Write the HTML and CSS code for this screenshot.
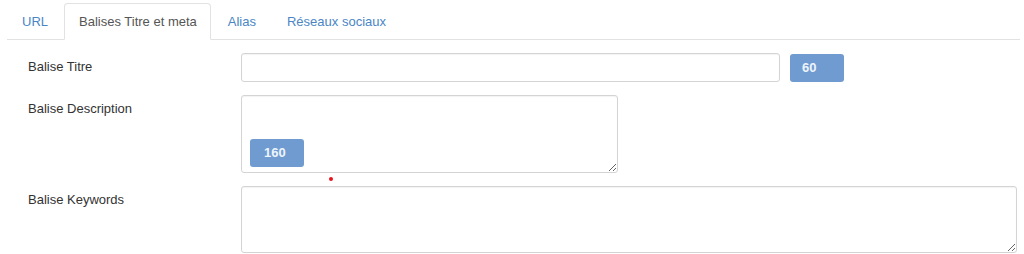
FILE: index.html
```html
<!DOCTYPE html>
<html lang="fr">
  <head>
    <meta charset="UTF-8" />
    <meta name="viewport" content="width=device-width, initial-scale=1.0" />
    <title>Balises Titre et meta</title>
    <link rel="stylesheet" href="styles.css">
  </head>
  <body>
    <div class="panel">
      <ul class="tabs">
        <li><a href="#">URL</a></li>
        <li class="active"><a href="#">Balises Titre et meta</a></li>
        <li><a href="#">Alias</a></li>
        <li><a href="#">Réseaux sociaux</a></li>
      </ul>

      <div class="form">
        <div class="row">
          <label for="metaTitle">Balise Titre</label>
          <div class="control inline">
            <input type="text" id="metaTitle" class="title-input" />
            <span class="counter">60</span>
          </div>
        </div>

        <div class="row">
          <label for="metaDesc">Balise Description</label>
          <div class="control">
            <div class="area-wrap">
              <textarea id="metaDesc" class="desc-area"></textarea>
              <span class="counter counter-inside">160</span>
              <span class="dot"></span>
            </div>
          </div>
        </div>

        <div class="row">
          <label for="metaKeys">Balise Keywords</label>
          <div class="control">
            <textarea id="metaKeys" class="keys-area"></textarea>
          </div>
        </div>
      </div>
    </div>
  </body>
</html>
```

FILE: styles.css
```css
body {
  margin: 0;
  font-family: "Liberation Sans", Arial, sans-serif;
  font-size: 13px;
  color: #333;
  background: #fff;
}

.panel {
  padding: 3px 4px 0 7px;
}

.tabs {
  display: flex;
  list-style: none;
  margin: 0;
  padding: 0;
  border-bottom: 1px solid #e2e2e2;
}

.tabs li {
  margin-right: 2px;
  margin-bottom: -1px;
}

.tabs a {
  display: block;
  padding: 10px 13px 9px 14px;
  line-height: 16px;
  color: #4a86c5;
  text-decoration: none;
  border: 1px solid transparent;
  border-radius: 4px 4px 0 0;
}

.tabs .active a {
  color: #555;
  background: #fff;
  border-color: #e2e2e2 #e2e2e2 #fff;
}

.form {
  display: flex;
  flex-direction: column;
  gap: 13px;
  padding: 13px 0 0 0;
}

.row {
  display: flex;
}

.row label {
  width: 234px;
  padding: 6px 0 0 21px;
  box-sizing: border-box;
  line-height: 16px;
}

.control {
  flex: 1;
}

.control.inline {
  display: flex;
  align-items: center;
}

input,
textarea {
  font-family: inherit;
  font-size: 13px;
  border: 1px solid #d4d4d4;
  border-radius: 3px;
  box-shadow: inset 0 1px 1px rgba(0, 0, 0, 0.05);
  box-sizing: border-box;
  margin: 0;
}

.title-input {
  width: 539px;
  height: 29px;
}

.counter {
  display: inline-block;
  width: 54px;
  height: 28px;
  line-height: 28px;
  padding-left: 12px;
  box-sizing: border-box;
  background: #6f9bd0;
  color: #eef4fb;
  font-weight: bold;
  font-size: 13px;
  border-radius: 3px;
  margin-left: 10px;
}

.area-wrap {
  position: relative;
  width: 377px;
}

.desc-area {
  display: block;
  width: 377px;
  height: 78px;
}

.counter-inside {
  position: absolute;
  left: 9px;
  top: 44px;
  margin-left: 0;
  padding-left: 14px;
}

.dot {
  position: absolute;
  left: 88px;
  top: 82px;
  width: 4px;
  height: 4px;
  border-radius: 50%;
  background: #e8141b;
}

.keys-area {
  display: block;
  width: 776px;
  height: 67px;
}
```
